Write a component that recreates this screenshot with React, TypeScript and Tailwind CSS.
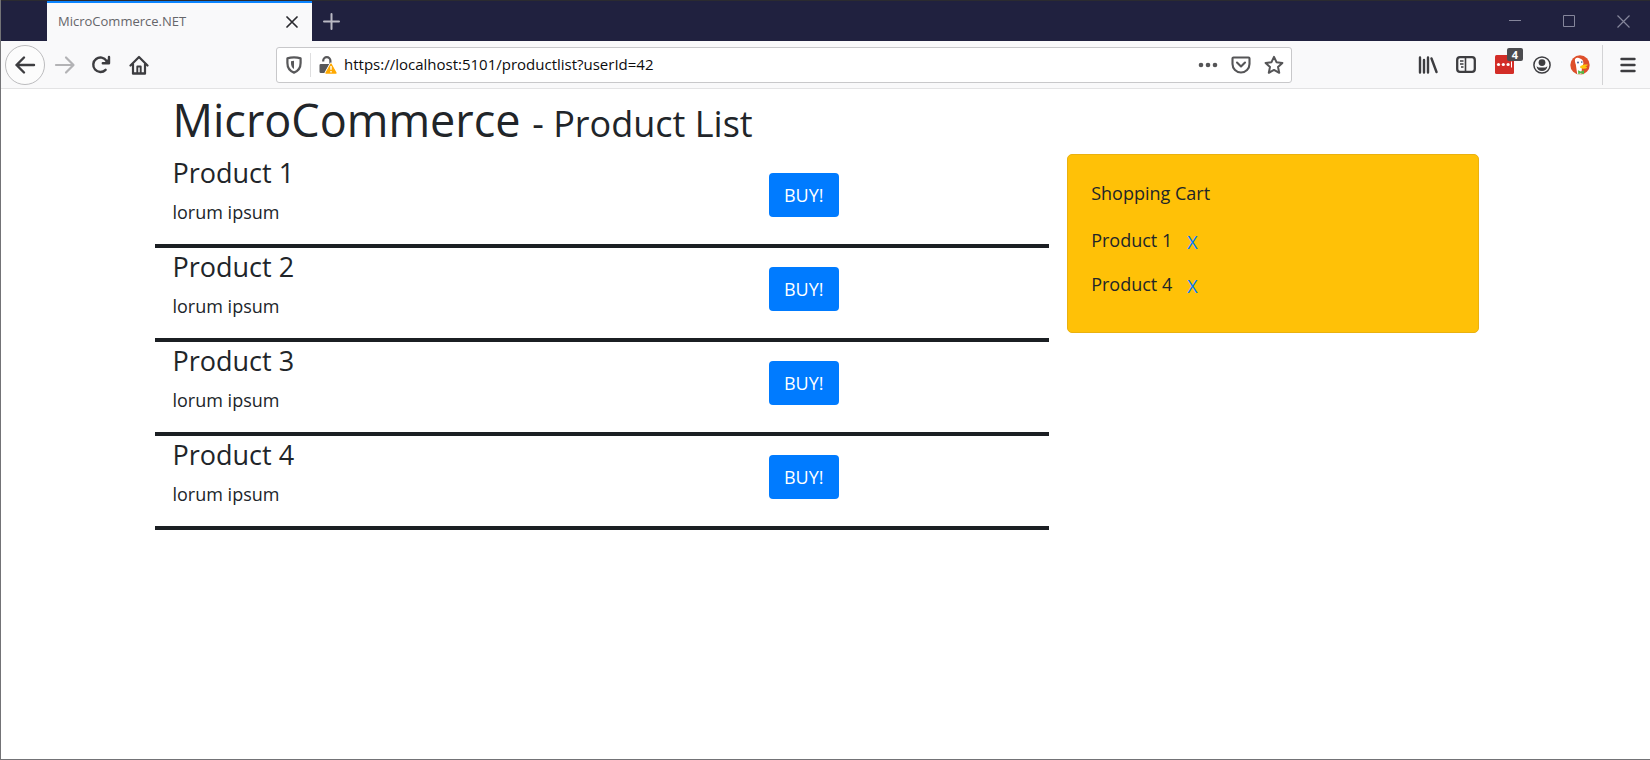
import { useState } from "react";

const products = [1, 2, 3, 4].map((id) => ({ id, name: `Product ${id}`, description: "lorum ipsum" }));

const iconButton = "flex h-8 w-8 items-center justify-center text-[#3d3d40]";

function BackIcon() {
  return (
    <svg width="22" height="20" viewBox="0 0 22 20" fill="none" stroke="currentColor" strokeWidth="2.4" strokeLinecap="round" strokeLinejoin="round">
      <path d="M20 10H2.500M10 2.500L2.500 10L10 17.500" />
    </svg>
  );
}

function ForwardIcon() {
  return (
    <svg width="22" height="20" viewBox="0 0 22 20" fill="none" stroke="currentColor" strokeWidth="2.200" strokeLinecap="round" strokeLinejoin="round">
      <path d="M2 10h17M12 2.500l7.500 7.500L12 17.500" />
    </svg>
  );
}

function ReloadIcon() {
  return (
    <svg width="20" height="20" viewBox="0 0 20 20" fill="none" stroke="currentColor" strokeWidth="2.400" strokeLinecap="round">
      <path d="M14.600 14.800A7.200 7.200 0 1 1 15.500 5.800" />
      <path d="M18 2v6.200h-6.200" strokeLinejoin="round" />
      <path d="M18 3v5h-5z" fill="currentColor" stroke="none" />
    </svg>
  );
}

function HomeIcon() {
  return (
    <svg width="20" height="20" viewBox="0 0 20 20" fill="none" stroke="currentColor" strokeWidth="2.200" strokeLinecap="round" strokeLinejoin="round">
      <path d="M1.500 10.500L10 2l8.500 8.500" />
      <path d="M4 9v9.500h12V9" />
      <path d="M8.300 18v-6.500h3.400V18" strokeWidth="1.900" />
      <path d="M4 18.500h12" />
    </svg>
  );
}

function ShieldIcon() {
  return (
    <svg width="16" height="18" viewBox="0 0 16 18" fill="none" stroke="#58585a" strokeWidth="2.200" strokeLinejoin="round">
      <path d="M8 1.300C5.500 1.300 3.300 1.700 1.400 2.400V7c0 4.300 2.200 7.900 6.600 9.600 4.400-1.700 6.600-5.300 6.600-9.600V2.400C12.700 1.700 10.500 1.300 8 1.300z" />
      <path d="M8 4.800v8.200C5.800 11.800 5 9.500 5 7V5.200z" fill="#58585a" stroke="none" />
    </svg>
  );
}

function InsecureLockIcon() {
  return (
    <svg width="18" height="18" viewBox="0 0 18 18">
      <path d="M4.200 5.400V4.700a3.600 3.600 0 0 1 7.200 0V8" fill="none" stroke="#58585a" strokeWidth="2.200" />
      <path d="M1.800 8h8.800L6 17H1.800A1.300 1.300 0 0 1 .5 15.700V9.300A1.300 1.300 0 0 1 1.800 8z" fill="#58585a" />
      <path d="M12 8l5 9H7z" fill="#ffa900" stroke="#fff" strokeWidth="3" strokeLinejoin="round" />
      <path d="M12 8l5 9H7z" fill="#ffa900" stroke="#ffa900" strokeWidth="1.400" strokeLinejoin="round" />
      <path d="M12 10v3.800M12 15v1.500" stroke="#fff" strokeWidth="1.400" />
    </svg>
  );
}

function PocketIcon() {
  return (
    <svg width="20" height="18" viewBox="0 0 20 18" fill="none" stroke="#555557" strokeWidth="2.100" strokeLinecap="round" strokeLinejoin="round">
      <path d="M2.500 1.500h15a1 1 0 0 1 1 1V8a8.500 8.500 0 0 1-17 0V2.500a1 1 0 0 1 1-1z" />
      <path d="M6 6.500l4 4 4-4" />
    </svg>
  );
}

function StarIcon() {
  return (
    <svg width="20" height="20" viewBox="0 0 20 20" fill="none" stroke="#555557" strokeWidth="2" strokeLinejoin="round">
      <path d="M10 1.800l2.500 5.400 5.900.7-4.400 4 1.200 5.900L10 14.900l-5.200 2.900L6 11.900l-4.400-4 5.900-.7z" />
    </svg>
  );
}

function LibraryIcon() {
  return (
    <svg width="20" height="18" viewBox="0 0 20 18" fill="none" stroke="currentColor" strokeWidth="2.400" strokeLinecap="round">
      <path d="M2 1.500v15M6 4v12.500M10 1.500v15M13.500 2.500l5 13.500" />
    </svg>
  );
}

function SidebarIcon() {
  return (
    <svg width="20" height="17" viewBox="0 0 20 17" fill="none" stroke="currentColor">
      <rect x="1.200" y="1.200" width="17.600" height="14.600" rx="2.800" strokeWidth="2.300" />
      <path d="M9.500 2v13" strokeWidth="1.600" />
      <path d="M4 5h3.500M4 8h3.500M5 11h2.500" strokeWidth="1.400" />
    </svg>
  );
}

function AccountIcon() {
  return (
    <svg width="18" height="18" viewBox="0 0 18 18">
      <circle cx="9" cy="9" r="8.100" fill="none" stroke="currentColor" strokeWidth="1.500" />
      <circle cx="9" cy="6.600" r="3.400" fill="currentColor" />
      <path d="M3.600 10.200c1 .9 2 1.200 3 1.200h4.800c1 0 2-.3 3-1.200-.3 2.900-2.600 4.800-5.400 4.800s-5.100-1.900-5.400-4.800z" fill="currentColor" />
    </svg>
  );
}

function DuckIcon() {
  return (
    <svg width="20" height="20" viewBox="0 0 20 20">
      <circle cx="10" cy="10" r="9.700" fill="#de4f2b" />
      <path d="M5 4.200c1.200-1.500 3.300-1.700 5-.8 2.400.6 3.600 2.500 3.400 5.400l-1.400 3.400-.6 7.100c-1.600.5-2.800.3-4.200-.3L5.800 9.500C5 7.500 4.800 5.500 5 4.200z" fill="#fff" />
      <path d="M10.500 11c1.700-1 4-1.800 7.200-1.400.5.800-1 1.500-2.500 1.900 1 .2 2 .3 1.800 1-.8 1.800-5 1.200-6.500.4-.5-.5-.4-1.400 0-1.900z" fill="#fdc70c" />
      <path d="M8 15.300l2.800 1.100 3.200-1.200v4l-3-1-2.700 1z" fill="#54b847" />
      <circle cx="8" cy="7.500" r=".9" fill="#2d4f8e" />
      <circle cx="11.800" cy="7.100" r=".8" fill="#2d4f8e" />
    </svg>
  );
}

function TitleBar() {
  return (
    <div className="flex h-[41px] items-stretch border-t border-[#2b2b30] bg-[#20213f] pl-[46px]">
      <div className="flex w-[265px] items-center justify-between border-t-2 border-[#0a84ff] bg-[#f9f9fa] pr-3 pl-[11px]">
        <span className="text-[13px] text-[#66666a]">MicroCommerce.NET</span>
        <button type="button" aria-label="Close tab" className="flex h-4 w-4 items-center justify-center text-[#2a2a2e]">
          <svg width="12" height="12" viewBox="0 0 12 12" stroke="currentColor" strokeWidth="1.700" strokeLinecap="round">
            <path d="M1 1l10 10M11 1L1 11" />
          </svg>
        </button>
      </div>
      <button type="button" aria-label="New tab" className="flex w-[38px] items-center justify-center text-[#b9b9c4]">
        <svg width="17" height="17" viewBox="0 0 17 17" stroke="currentColor" strokeWidth="2" strokeLinecap="round">
          <path d="M8.500 1v15M1 8.500h15" />
        </svg>
      </button>
      <div className="ml-auto flex text-[#85869b]">
        <button type="button" aria-label="Minimize" className="flex w-[54px] items-center justify-center">
          <svg width="12" height="12" viewBox="0 0 12 12" stroke="currentColor"><path d="M0 5.500h12" /></svg>
        </button>
        <button type="button" aria-label="Maximize" className="flex w-[54px] items-center justify-center">
          <svg width="12" height="12" viewBox="0 0 12 12" fill="none" stroke="currentColor"><path d="M.5.500h11v11H.5z" /></svg>
        </button>
        <button type="button" aria-label="Close window" className="flex w-[54px] items-center justify-center">
          <svg width="13" height="13" viewBox="0 0 13 13" stroke="currentColor" strokeWidth="1.200"><path d="M.5.500l12 12M12.500.500l-12 12" /></svg>
        </button>
      </div>
    </div>
  );
}

function Toolbar() {
  const [url, setUrl] = useState("https://localhost:5101/productlist?userId=42");
  return (
    <div className="flex h-12 items-center border-b border-[#e3e3e4] bg-[#f9f9fa]">
      <nav aria-label="Browser navigation" className="flex w-[275px] shrink-0 items-center gap-[6px] pl-1">
        <button type="button" aria-label="Back" className="flex h-10 w-10 items-center justify-center rounded-full border border-[#bcbcbe] bg-[#fcfcfc] text-[#3d3d40]"><BackIcon /></button>
        <button type="button" aria-label="Forward" className="flex h-8 w-7 items-center justify-center text-[#b3b3b5]"><ForwardIcon /></button>
        <button type="button" aria-label="Reload" className={iconButton}><ReloadIcon /></button>
        <button type="button" aria-label="Home" className={iconButton}><HomeIcon /></button>
      </nav>
      <div className="flex h-9 max-w-[1016px] flex-1 items-center rounded-[3px] border border-[#c8c8ca] bg-white pr-px pl-[9px]">
        <ShieldIcon />
        <span className="mx-2 h-6 w-px bg-[#dededf]" />
        <InsecureLockIcon />
        <input aria-label="Address" value={url} onChange={(e) => setUrl(e.target.value)} className="ml-[7px] min-w-0 flex-1 bg-transparent text-[15px] text-[#0c0c0d] outline-none" />
        <button type="button" aria-label="Page actions" className="flex w-8 items-center justify-center">
          <svg width="20" height="6" viewBox="0 0 20 6" fill="#555557"><circle cx="3" cy="3" r="2.300" /><circle cx="10" cy="3" r="2.300" /><circle cx="17" cy="3" r="2.300" /></svg>
        </button>
        <button type="button" aria-label="Save to Pocket" className="flex w-[34px] items-center justify-center"><PocketIcon /></button>
        <button type="button" aria-label="Bookmark" className="flex w-8 items-center justify-center"><StarIcon /></button>
      </div>
      <div className="ml-auto flex shrink-0 items-center gap-[6px] pr-[3px]">
        <button type="button" aria-label="Library" className={iconButton}><LibraryIcon /></button>
        <button type="button" aria-label="Sidebars" className={iconButton}><SidebarIcon /></button>
        <button type="button" aria-label="Password manager" className="relative flex h-8 w-8 items-center justify-center">
          <svg width="19" height="19" viewBox="0 0 19 19">
            <rect width="19" height="19" rx="1.500" fill="#d32d27" />
            <circle cx="3.500" cy="9.500" r="1.600" fill="#fff" /><circle cx="8.300" cy="9.500" r="1.600" fill="#fff" /><circle cx="13.100" cy="9.500" r="1.600" fill="#fff" />
            <path d="M16.500 6.500v6" stroke="#fff" />
          </svg>
          <span className="absolute -top-px -right-[3px] flex h-[13px] w-4 items-center justify-center rounded-[2px] bg-[#4c4c4f] text-[11px] leading-none font-bold text-white">4</span>
        </button>
        <button type="button" aria-label="Account" className={iconButton}><AccountIcon /></button>
        <button type="button" aria-label="Privacy extension" className={iconButton}><DuckIcon /></button>
        <span className="h-10 w-px bg-[#d3d3d5]" />
        <button type="button" aria-label="Menu" className="flex h-8 w-[38px] items-center justify-center text-[#3d3d40]">
          <svg width="16" height="16" viewBox="0 0 16 16" stroke="currentColor" strokeWidth="2.400" strokeLinecap="round"><path d="M1.500 2h13M1.500 8h13M1.500 14h13" /></svg>
        </button>
      </div>
    </div>
  );
}

export default function App() {
  const [cart, setCart] = useState([1, 4]);
  const add = (id: number) => setCart((c) => (c.includes(id) ? c : [...c, id]));
  const remove = (id: number) => setCart((c) => c.filter((x) => x !== id));

  return (
    <div className="flex min-h-screen flex-col border-b border-l border-[#737376] bg-white font-['Open_Sans','Noto_Sans',sans-serif] text-[#212529]">
      <header>
        <TitleBar />
        <Toolbar />
      </header>
      <main className="mx-auto w-full max-w-[1342px] pt-[3px]">
        <h1 className="px-[18px] text-[45px] leading-[56px]">
          MicroCommerce <small className="text-[36px]">- Product List</small>
        </h1>
        <div className="mt-[2px] grid grid-cols-3 items-start">
          <section className="col-span-2" aria-label="Products">
            {products.map((p) => (
              <article key={p.id} className="grid grid-cols-3 border-b-4 border-[#1b1f23]">
                <div className="col-span-2 px-[18px] pb-[18px]">
                  <h2 className="text-[27px] leading-[38px]">{p.name}</h2>
                  <p className="mt-[6px] text-[18px] leading-7">{p.description}</p>
                </div>
                <div className="px-[18px] pt-[19px]">
                  <button type="button" onClick={() => add(p.id)} className="h-11 rounded-[4px] bg-[#007bff] px-[15px] text-[18px] leading-7 text-white">BUY!</button>
                </div>
              </article>
            ))}
          </section>
          <aside className="px-[18px]">
            <div className="rounded-[5px] border border-[#eab10f] bg-[#ffc107] px-[23px] pt-6 pb-[26px]">
              <p className="mb-[11px] text-[18px] leading-7">Shopping Cart</p>
              <ul>
                {cart.map((id) => (
                  <li key={id} className="flex h-11 items-center text-[18px]">
                    <span>Product {id}</span>
                    <button type="button" aria-label={`Remove Product ${id}`} onClick={() => remove(id)} className="px-[15px] pt-1 text-[#007bff]">X</button>
                  </li>
                ))}
              </ul>
            </div>
          </aside>
        </div>
      </main>
    </div>
  );
}
